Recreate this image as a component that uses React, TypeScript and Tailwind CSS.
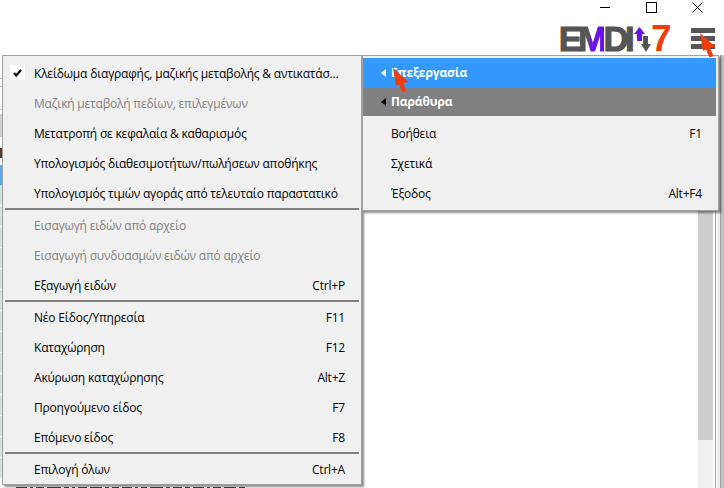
const font = "[font-family:'Open_Sans','Noto_Sans',sans-serif]"

type Item = { label: string; key?: string; off?: boolean; checked?: boolean }

const leftGroups: Item[][] = [
  [
    { label: 'Κλείδωμα διαγραφής, μαζικής μεταβολής & αντικατάσ...', checked: true },
    { label: 'Μαζική μεταβολή πεδίων, επιλεγμένων', off: true },
    { label: 'Μετατροπή σε κεφαλαία & καθαρισμός' },
    { label: 'Υπολογισμός διαθεσιμοτήτων/πωλήσεων αποθήκης' },
    { label: 'Υπολογισμός τιμών αγοράς από τελευταίο παραστατικό' },
  ],
  [
    { label: 'Εισαγωγή ειδών από αρχείο', off: true },
    { label: 'Εισαγωγή συνδυασμών ειδών από αρχείο', off: true },
    { label: 'Εξαγωγή ειδών', key: 'Ctrl+P' },
  ],
  [
    { label: 'Νέο Είδος/Υπηρεσία', key: 'F11' },
    { label: 'Καταχώρηση', key: 'F12' },
    { label: 'Ακύρωση καταχώρησης', key: 'Alt+Z' },
    { label: 'Προηγούμενο είδος', key: 'F7' },
    { label: 'Επόμενο είδος', key: 'F8' },
  ],
  [{ label: 'Επιλογή όλων', key: 'Ctrl+A' }],
]

const rightItems: Item[] = [
  { label: 'Βοήθεια', key: 'F1' },
  { label: 'Σχετικά' },
  { label: 'Έξοδος', key: 'Alt+F4' },
]

// tops of the grid text that shows under the left menu
const specks = [11, 3, 8, 14, 5, 3, 9, 12, 4, 7, 10, 3, 6, 13, 4, 9, 5, 11, 3, 8, 12, 6]

function Cursor({ className }: { className: string }) {
  return (
    <svg className={className} width="16" height="25" viewBox="0 0 16 25">
      <path d="M0 0 L15.5 14 L10 15 L13.5 23 L9.5 24.5 L6 16.5 L3 18 Z" fill="#f23c0c" />
    </svg>
  )
}

function Row({ item }: { item: Item }) {
  return (
    <div className={`relative flex h-[30px] items-center justify-between pl-[31px] pr-[16px] pt-px ${item.off ? 'text-[#808080]' : 'text-black'}`}>
      {item.checked && (
        <div className="absolute left-[7px] top-[7px] flex h-[15px] w-[15px] items-center justify-center bg-white">
          <svg width="9" height="8" viewBox="0 0 9 8">
            <path d="M1 4 L3.2 6.4 L8 1" fill="none" stroke="#000" strokeWidth="2.2" />
          </svg>
        </div>
      )}
      <span className="whitespace-nowrap">{item.label}</span>
      {item.key && <span>{item.key}</span>}
    </div>
  )
}

export default function App() {
  return (
    <div className={`relative h-[488px] w-[724px] overflow-hidden bg-white text-[12px] tracking-[-0.2px] ${font}`}>
      {/* window top */}
      <div className="flex h-[55px] flex-col">
        <div className="flex h-[25px] justify-end pr-[4px]">
          <div className="flex h-[14px] w-[46px] items-center justify-center">
            <div className="h-px w-[10px] bg-black" />
          </div>
          <div className="flex h-[14px] w-[46px] items-center justify-center">
            <div className="h-[11px] w-[11px] border border-black" />
          </div>
          <div className="flex h-[14px] w-[46px] items-center justify-center">
            <svg width="11" height="11" viewBox="0 0 11 11">
              <path d="M0.5 0.5 L10.5 10.5 M10.5 0.5 L0.5 10.5" stroke="#000" strokeWidth="1" />
            </svg>
          </div>
        </div>
        <div className="flex h-[27px] items-center justify-end pr-[9px]">
          <div className="flex h-[27px] items-center font-['Liberation_Sans'] text-[35px] font-bold leading-[27px] tracking-[-3.8px] text-[#555555] [-webkit-text-stroke:1px_#555555]">
            <span>E</span>
            <span className="bg-[linear-gradient(90deg,#555555_48%,#6a10f0_48%)] bg-clip-text text-transparent [-webkit-text-stroke:1px_transparent]">M</span>
            <span>DI</span>
          </div>
          <svg className="ml-[3px]" width="17" height="27" viewBox="0 0 17 27">
            <path d="M5.5 2 L11 9 H8 V16 H3 V9 H0 Z" fill="#6a10f0" />
            <path d="M9 11 H14 V19 H17 L12 27 L7 19 H9 Z" fill="#555555" />
          </svg>
          <span className="w-[20px] font-['Liberation_Sans'] text-[37px] font-bold leading-[27px] tracking-normal text-[#f23c0c]">7</span>
          <div className="ml-[20px] flex h-[21px] w-[24px] flex-col justify-between">
            <div className="h-[5px] bg-[#555555]" />
            <div className="h-[5px] bg-[#555555]" />
            <div className="h-[5px] bg-[#555555]" />
          </div>
        </div>
      </div>

      {/* window behind the menus */}
      <div className="flex h-[433px]">
        <div className="flex w-[2px] flex-col overflow-hidden">
          <div className="mt-[23px] h-px shrink-0 bg-[#c8c8c8]" />
          <div className="mt-[7px] h-px shrink-0 bg-[#c8c8c8]" />
          <div className="mt-[22px] h-px shrink-0 bg-[#c8c8c8]" />
          <div className="mt-[4px] h-[23px] shrink-0 bg-[#d0d0d0]" />
          <div className="mt-[11px] h-[10px] shrink-0 bg-[#5a3a20]" />
          <div className="mt-[7px] h-[20px] shrink-0 bg-[#5aa8f0]" />
          {Array.from({ length: 14 }).map((_, i) => (
            <div key={i} className="h-[21px] shrink-0 border-b border-white bg-[#cde6dc]" />
          ))}
        </div>
        <div className="flex flex-1 flex-col justify-end">
          <div className="ml-[14px] flex h-px gap-[3px]">
            {specks.map((w, i) => (
              <div key={i} className="h-px bg-[#444444]" style={{ width: w }} />
            ))}
          </div>
        </div>
        <div className="flex w-[15px] flex-col">
          <div className="h-[385px] bg-[#cdcdcd]" />
          <div className="flex-1 bg-[#f0f0f0]" />
        </div>
        <div className="w-[2px] bg-white" />
        <div className="w-px bg-[#a0a0a0]" />
        <div className="w-px bg-white" />
        <div className="w-[3px] bg-[#eeeeee]" />
        <div className="w-px bg-[#a0a0a0]" />
        <div className="w-[3px] bg-[#c0c0c0]" />
      </div>

      {/* left menu */}
      <div className="absolute left-[2px] top-[55px] w-[360px] border border-[#a0a0a0] bg-[#f0f0f0] pt-[2px] shadow-[2px_2px_2px_rgba(0,0,0,0.45)]">
        {leftGroups.map((group, i) => (
          <div key={i}>
            {i > 0 && <div className="mx-[2px] h-[2px] bg-[#808080]" />}
            {group.map((item) => (
              <Row key={item.label} item={item} />
            ))}
          </div>
        ))}
      </div>

      {/* right menu */}
      <div className="absolute left-[362px] top-[55px] w-[357px] border border-[#a0a0a0] bg-[#f0f0f0] pb-[2px] pr-[2px] pt-[2px] shadow-[2px_2px_2px_rgba(0,0,0,0.45)]">
        <div className="flex h-[30px] items-center bg-[#3399ff] pl-[18px] font-bold tracking-[-0.1px] text-white">
          <div className="h-0 w-0 border-y-4 border-r-[5px] border-y-transparent border-r-white" />
          <span className="ml-[5px]">Επεξεργασία</span>
        </div>
        <div className="flex h-[28px] items-center bg-[#808080] pl-[18px] font-bold tracking-[-0.1px] text-white">
          <div className="h-0 w-0 border-y-4 border-r-[5px] border-y-transparent border-r-black" />
          <span className="ml-[5px]">Παράθυρα</span>
        </div>
        <div className="-mr-[2px] mt-[2px]">
          {rightItems.map((item) => (
            <div key={item.label} className="flex h-[30px] items-center justify-between pl-[28px] pr-[16px] pt-px text-black">
              <span>{item.label}</span>
              {item.key && <span>{item.key}</span>}
            </div>
          ))}
        </div>
      </div>

      {/* red pointers over the menus */}
      <Cursor className="absolute left-[393px] top-[68px]" />
      <Cursor className="absolute left-[700px] top-[33px]" />
    </div>
  )
}
